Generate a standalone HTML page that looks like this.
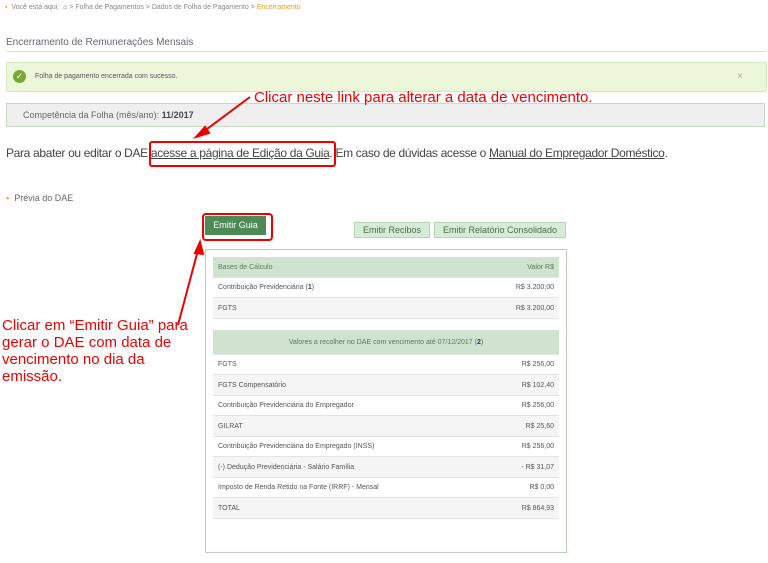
<!DOCTYPE html><html><head><meta charset="utf-8"><style>
body{margin:0;width:768px;height:563px;background:#fff;font-family:"Liberation Sans",sans-serif;position:relative;overflow:hidden;color:#555}
.a{position:absolute;white-space:nowrap}
.row{position:absolute;left:213px;width:346px;height:20px;font-size:7px;color:#555;border-bottom:1px solid #e3e3e3}
.row span{position:absolute;top:7px}
.row .r{right:5px}
.row .l{left:5px}
.hd{background:#cfe3d0;color:#5a7a5a}
.btn{position:absolute;background:#d6ecd6;border:1px solid #b6d4b6;color:#4d6b4d;font-size:9px;text-align:center;line-height:14px}
.red{color:#e00;font-size:15px}
</style></head><body>
<div class="a" style="left:5px;top:4px;font-size:7px;color:#888"><span style="color:#e8a020">▪</span> &nbsp;Você está aqui: &nbsp;<span style="color:#556">⌂</span> &gt; Folha de Pagamentos &gt; Dados de Folha de Pagamento &gt; <span style="color:#e8a020">Encerramento</span></div>
<div class="a" style="left:6px;top:37px;font-size:10px;color:#667">Encerramento de Remunerações Mensais</div>
<div class="a" style="left:6px;top:51px;width:760px;height:1px;background:#d8dbe6"></div>
<div class="a" style="left:6px;top:62px;width:759px;height:28px;background:#ebf7d8;border:1px solid #d6e8c2;border-radius:2px"></div>
<div class="a" style="left:13px;top:70px;width:13px;height:13px;border-radius:50%;background:#7aa838;color:#fff;font-size:9px;text-align:center;line-height:13px">✓</div>
<div class="a" style="left:35px;top:73px;font-size:7px;color:#556">Folha de pagamento encerrada com sucesso.</div>
<div class="a" style="left:737px;top:71px;font-size:10px;color:#aaa">×</div>
<div class="a" style="left:6px;top:103px;width:757px;height:22px;background:#efefef;border:1px solid #c8d8c4"></div>
<div class="a" style="left:23px;top:110px;font-size:9px;color:#666">Competência da Folha (mês/ano): <b style="color:#445">11/2017</b></div>
<div class="a red" style="left:254px;top:89px">Clicar neste link para alterar a data de vencimento.</div>
<svg class="a" style="left:0;top:0" width="768" height="563"><g stroke="#e00" stroke-width="2" fill="#e00"><line x1="250" y1="97" x2="203" y2="132"/><polygon points="196,137 205,127 209,133"/><line x1="178" y1="325" x2="198" y2="250"/><polygon points="200,242 195,253 203,254"/></g></svg>
<div class="a" style="left:6px;top:146px;font-family:'Liberation Sans',Arial,sans-serif;font-size:12px;letter-spacing:-0.33px;color:#444">Para abater ou editar o DAE <span style="text-decoration:underline">acesse a página de Edição da Guia</span>. Em caso de dúvidas acesse o <span style="text-decoration:underline">Manual do Empregador Doméstico</span>.</div>
<div class="a" style="left:149px;top:141px;width:183px;height:22px;border:2px solid #e00;border-radius:3px"></div>
<div class="a" style="left:6px;top:193px;font-size:9px;color:#666"><span style="color:#e8a020">▪</span> &nbsp;Prévia do DAE</div>
<div class="a" style="left:202px;top:213px;width:67px;height:24px;border:2px solid #e00;border-radius:4px"></div>
<div class="a" style="left:205px;top:216px;width:61px;height:19px;background:#4d8a55;color:#fff;font-size:9px;text-align:center;line-height:19px">Emitir Guia</div>
<div class="btn" style="left:354px;top:222px;width:74px">Emitir Recibos</div>
<div class="btn" style="left:434px;top:222px;width:130px">Emitir Relatório Consolidado</div>
<div class="a" style="left:205px;top:249px;width:360px;height:302px;border:1px solid #b8d0b8"></div>
<div class="a red" style="left:2px;top:317px;line-height:17px;white-space:normal;width:200px">Clicar em “Emitir Guia” para gerar o DAE com data de vencimento no dia da emissão.</div>
<div class="row hd" style="top:257px"><span class="l">Bases de Cálculo</span><span class="r">Valor R$</span></div>
<div class="row" style="top:277px"><span class="l">Contribuição Previdenciária (<b style="color:#336">1</b>)</span><span class="r">R$ 3.200,00</span></div>
<div class="row" style="top:298px;background:#f5f5f5"><span class="l">FGTS</span><span class="r">R$ 3.200,00</span></div>
<div class="row hd" style="top:330px;height:24px"><span style="left:0;right:0;text-align:center;top:9px">Valores a recolher no DAE com vencimento até 07/12/2017 (<b style="color:#336">2</b>)</span></div>
<div class="row" style="top:354px"><span class="l">FGTS</span><span class="r">R$ 256,00</span></div>
<div class="row" style="top:375px;background:#f5f5f5"><span class="l">FGTS Compensatório</span><span class="r">R$ 102,40</span></div>
<div class="row" style="top:395px"><span class="l">Contribuição Previdenciária do Empregador</span><span class="r">R$ 256,00</span></div>
<div class="row" style="top:416px;background:#f5f5f5"><span class="l">GILRAT</span><span class="r">R$ 25,60</span></div>
<div class="row" style="top:436px"><span class="l">Contribuição Previdenciária do Empregado (INSS)</span><span class="r">R$ 256,00</span></div>
<div class="row" style="top:457px;background:#f5f5f5"><span class="l">(-) Dedução Previdenciária - Salário Família</span><span class="r">- R$ 31,07</span></div>
<div class="row" style="top:477px"><span class="l">Imposto de Renda Retido na Fonte (IRRF) - Mensal</span><span class="r">R$ 0,00</span></div>
<div class="row" style="top:498px;background:#f5f5f5"><span class="l">TOTAL</span><span class="r">R$ 864,93</span></div>
</body></html>
